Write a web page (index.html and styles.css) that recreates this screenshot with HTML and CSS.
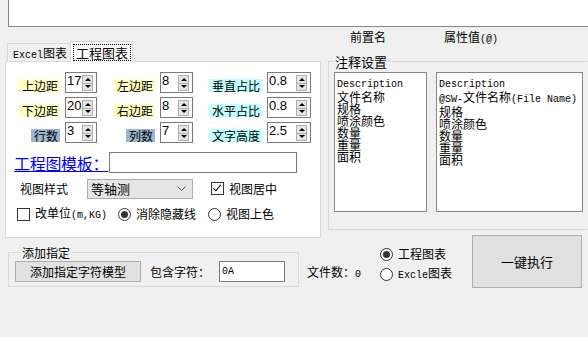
FILE: index.html
```html
<!DOCTYPE html>
<html lang="zh-CN">
<head>
  <meta charset="UTF-8" />
  <title>工程图表</title>
  <link rel="stylesheet" href="styles.css">
</head>
<body>
  <div class="topbox"></div>

  <div class="main">
    <div class="tabs">
      <div class="tabstrip">
        <div class="tab"><span class="mono">Excel</span>图表</div>
        <div class="tab active"><span class="focus">工程图表</span></div>
      </div>
      <div class="panel">
        <div class="grid">
          <span class="lbl yellow">上边距</span>
          <div class="spin"><span class="val">17</span><i class="btns"><b class="up"></b><b class="down"></b></i></div>
          <span class="lbl yellow">左边距</span>
          <div class="spin"><span class="val">8</span><i class="btns"><b class="up"></b><b class="down"></b></i></div>
          <span class="lbl cyan">垂直占比</span>
          <div class="spin"><span class="val">0.8</span><i class="btns"><b class="up"></b><b class="down"></b></i></div>

          <span class="lbl yellow">下边距</span>
          <div class="spin"><span class="val">20</span><i class="btns"><b class="up"></b><b class="down"></b></i></div>
          <span class="lbl yellow">右边距</span>
          <div class="spin"><span class="val">8</span><i class="btns"><b class="up"></b><b class="down"></b></i></div>
          <span class="lbl cyan">水平占比</span>
          <div class="spin"><span class="val">0.8</span><i class="btns"><b class="up"></b><b class="down"></b></i></div>

          <span class="lbl steel">行数</span>
          <div class="spin"><span class="val">3</span><i class="btns"><b class="up"></b><b class="down"></b></i></div>
          <span class="lbl steel">列数</span>
          <div class="spin"><span class="val">7</span><i class="btns"><b class="up"></b><b class="down"></b></i></div>
          <span class="lbl cyan">文字高度</span>
          <div class="spin"><span class="val">2.5</span><i class="btns"><b class="up"></b><b class="down"></b></i></div>
        </div>

        <div class="tpl-row">
          <a class="link" href="#">工程图模板：</a>
          <input class="field tpl" type="text" />
        </div>

        <div class="view-row">
          <span class="vlabel">视图样式</span>
          <div class="combo">
            <span>等轴测</span>
            <svg width="9" height="6" viewBox="0 0 9 6"><path d="M0.5 0.5 L4.5 4.5 L8.5 0.5" fill="none" stroke="#555" stroke-width="1"/></svg>
          </div>
          <span class="check on center-chk"></span><span class="opt-text">视图居中</span>
        </div>

        <div class="opt-row">
          <span class="check"></span><span class="opt-text">改单位<span class="mono">(m,KG)</span></span>
          <span class="radio on r1"></span><span class="opt-text">消除隐藏线</span>
          <span class="radio r2"></span><span class="opt-text">视图上色</span>
        </div>
      </div>
    </div>

    <div class="right">
      <div class="heads">
        <span>前置名</span>
        <span class="head2">属性值<span class="mono">(@)</span></span>
      </div>
      <fieldset class="notes">
        <legend>注释设置</legend>
        <div class="lists">
          <div class="listbox short">
            <div><span class="mono">Description</span></div>
            <div>文件名称</div>
            <div>规格</div>
            <div>喷涂颜色</div>
            <div>数量</div>
            <div>重量</div>
            <div>面积</div>
          </div>
          <div class="listbox long">
            <div><span class="mono">Description</span></div>
            <div><span class="mono">@SW-</span>文件名称<span class="mono">(File Name)</span></div>
            <div>规格</div>
            <div>喷涂颜色</div>
            <div>数量</div>
            <div>重量</div>
            <div>面积</div>
          </div>
        </div>
      </fieldset>
    </div>
  </div>

  <div class="bottom">
    <fieldset class="add">
      <legend>添加指定</legend>
      <div class="add-row">
        <button class="btn add-btn">添加指定字符模型</button>
        <span class="contain">包含字符：</span>
        <input class="field chars" type="text" value="0A" />
      </div>
    </fieldset>

    <div class="count">文件数：<span class="mono">0</span></div>

    <div class="kind">
      <div class="kind-row"><span class="radio on"></span><span class="opt-text">工程图表</span></div>
      <div class="kind-row"><span class="radio"></span><span class="opt-text"><span class="mono">Excle</span>图表</span></div>
    </div>

    <button class="btn run">一键执行</button>
  </div>
</body>
</html>
```

FILE: styles.css
```css
*, *::before, *::after { box-sizing: border-box; }
html, body { margin: 0; padding: 0; }
body {
  width: 588px;
  height: 337px;
  overflow: hidden;
  background: #f0f0f0;
  color: #000;
  font: 12px/14px "Noto Sans CJK SC", sans-serif;
}
.mono { font-family: "Liberation Mono", monospace; font-size: 10px; }

.topbox {
  height: 27px;
  margin-left: 8px;
  background: #fff;
  border-left: 1px solid #828790;
  border-bottom: 1px solid #828790;
}

.main { display: flex; height: 211px; }

/* tab control */
.tabs { width: 316px; margin-left: 5px; padding-top: 14px; flex: none; }
.tabstrip { display: flex; align-items: flex-end; height: 20px; padding-left: 2px; }
.tab {
  width: 64px;
  height: 18px;
  border: 1px solid #d9d9d9;
  border-bottom: none;
  padding-left: 5px;
  line-height: 17px;
  white-space: nowrap;
}
.tab.active {
  width: 63px;
  height: 21px;
  margin-bottom: -1px;
  margin-left: -1px;
  padding: 2px 1px 1px 2px;
  background: #fff;
  position: relative;
  z-index: 1;
}
.focus {
  display: block;
  height: 17px;
  border: 1px dotted #000;
  font-size: 13px;
  line-height: 15px;
  text-align: center;
}
.panel {
  height: 177px;
  border: 1px solid #d9d9d9;
  background: #fff;
  padding-top: 10px;
}

.grid {
  display: grid;
  grid-template-columns: 59px 32px 63px 33px 74px 44px;
  grid-auto-rows: 21px;
  row-gap: 4px;
}
.lbl {
  justify-self: end;
  align-self: end;
  margin: 0 5px 1px 0;
  height: 13px;
  line-height: 13px;
  padding: 0 2px 0 3px;
  white-space: nowrap;
}
.yellow { background: #ffffc0; }
.cyan { background: #c0ffff; }
.steel { background: #9cb6d2; }

.spin {
  display: flex;
  border: 1px solid #7a7a7a;
  background: #fff;
}
.spin .val {
  flex: 1;
  font: 13px/16px "Liberation Sans", sans-serif;
  padding-left: 1px;
}
.btns {
  display: flex;
  flex-direction: column;
  width: 11px;
  margin: 2px 3px 1px 0;
}
.btns b {
  flex: 1;
  display: flex;
  align-items: center;
  justify-content: center;
  background: #e5e5e5;
  border: 1px solid #adadad;
}
.btns b + b { border-top: none; }
.btns b::after {
  content: "";
  border-left: 3px solid transparent;
  border-right: 3px solid transparent;
}
.btns .up::after { border-bottom: 3px solid #000; }
.btns .down::after { border-top: 3px solid #000; }

.tpl-row { display: flex; align-items: center; margin-top: 9px; padding-left: 8px; }
.link {
  color: #0000ff;
  font-size: 16px;
  line-height: 20px;
  text-decoration: underline;
  letter-spacing: -0.3px;
}
.field {
  height: 21px;
  border: 1px solid #7a7a7a;
  background: #fff;
  margin: 0;
  padding: 0 2px;
  font: 10px "Liberation Mono", monospace;
  outline: none;
}
.tpl { width: 188px; margin-left: 1px; }

.view-row { display: flex; align-items: center; height: 21px; margin-top: 5px; padding-left: 14px; }
.vlabel { width: 67px; }
.combo {
  display: flex;
  align-items: center;
  justify-content: space-between;
  width: 106px;
  height: 20px;
  padding: 0 6px 0 3px;
  background: #e5e5e5;
  border: 1px solid #adadad;
  font-size: 13px;
}

.check, .radio {
  display: inline-block;
  flex: none;
  width: 13px;
  height: 13px;
  border: 1px solid #333;
  background: #fff;
  position: relative;
}
.radio { border-radius: 50%; }
.radio.on::after {
  content: "";
  position: absolute;
  left: 2px;
  top: 2px;
  width: 7px;
  height: 7px;
  border-radius: 50%;
  background: #333;
}
.check.on::after {
  content: "";
  position: absolute;
  left: 3px;
  top: 0;
  width: 4px;
  height: 8px;
  border-right: 1.5px solid #000;
  border-bottom: 1.5px solid #000;
  transform: rotate(40deg);
}
.opt-text { margin-left: 5px; white-space: nowrap; }
.center-chk { margin-left: 18px; }

.opt-row { display: flex; align-items: center; height: 20px; margin-top: 5px; padding-left: 11px; }
.r1 { margin-left: 11px; }
.r2 { margin-left: 12px; }

/* right column */
.right { flex: 1; min-width: 0; }
.heads { height: 26px; padding: 3px 0 0 29px; display: flex; }
.head2 { margin-left: 58px; }
.notes {
  margin: 0 0 0 7px;
  width: 260px;
  min-width: 0;
  border: 1px solid #d9d9d9;
  border-right-color: transparent;
  padding: 0 0 17px 5px;
}
.notes legend {
  padding: 0 1px;
  font-size: 13px;
  line-height: 17px;
}
.lists { display: flex; gap: 9px; margin-top: 2px; }
.listbox {
  height: 140px;
  border: 1px solid #828790;
  background: #fff;
  padding: 3px 2px;
  line-height: 12px;
  white-space: nowrap;
  overflow: hidden;
}
.listbox.short { width: 93px; flex: none; }
.listbox.long { width: 147px; flex: none; }

/* bottom */
.bottom { display: flex; align-items: flex-start; }
.add {
  margin: 6px 0 0 8px;
  width: 291px;
  border: 1px solid #d9d9d9;
  padding: 0 0 4px 6px;
}
.add legend { margin-left: 5px; padding: 0 2px; line-height: 17px; }
.add-row { display: flex; align-items: center; }
.btn {
  background: #e1e1e1;
  border: 1px solid #adadad;
  font: 12px/14px "Noto Sans CJK SC", sans-serif;
  color: #000;
  padding: 0;
}
.add-btn { width: 126px; height: 21px; }
.contain { margin-left: 9px; width: 60px; }
.chars { width: 66px; margin-left: 9px; }

.count { margin: 27px 0 0 8px; width: 65px; white-space: nowrap; }
.kind { margin: 9px 0 0 8px; width: 92px; }
.kind-row { display: flex; align-items: center; height: 14px; }
.kind-row + .kind-row { margin-top: 6px; }
.run { width: 110px; height: 53px; margin-top: -3px; font-size: 13px; }
```
